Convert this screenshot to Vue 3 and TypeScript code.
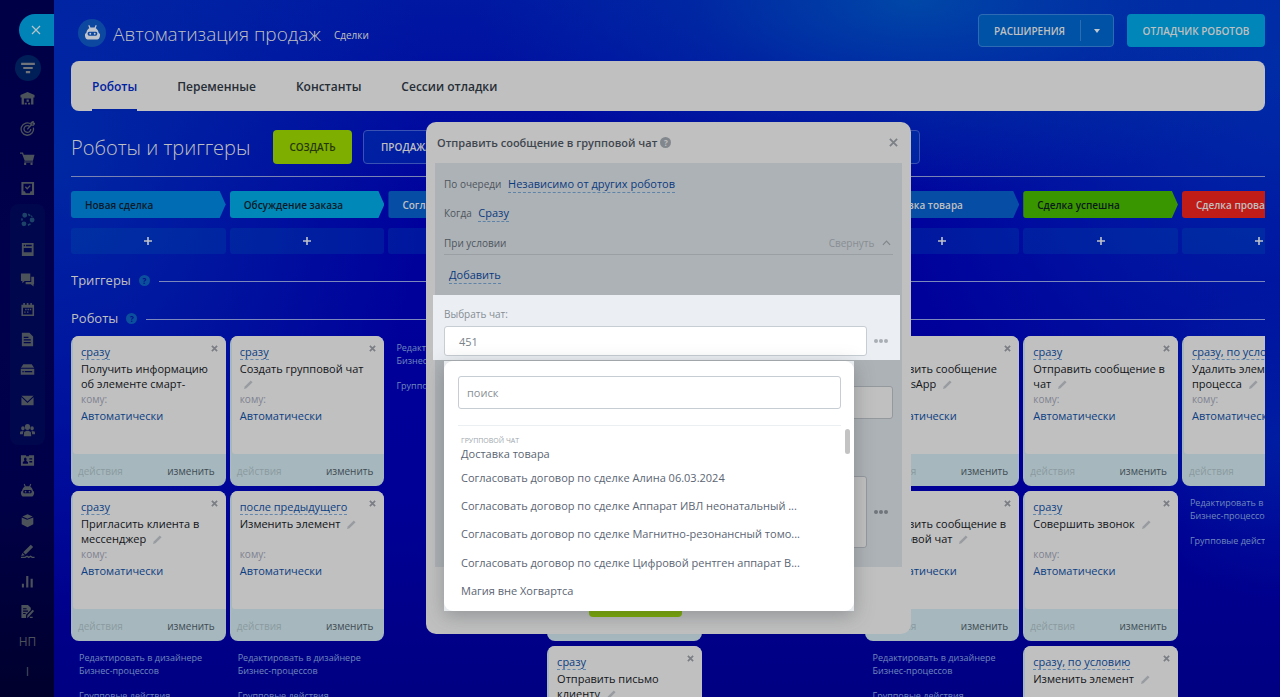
<script setup lang="ts">
import { ref } from 'vue'

interface Icon {
  name: string
  fill?: string
  stroke?: string
}

interface Robot {
  when: string
  title: string
  clipped?: boolean
}

interface Stage {
  title: string
  tone: string
  robots: Robot[]
  links: boolean
}

const robotHead =
  'M2.2 8.2C2.6 5.6 4 4.4 5 3.9L4 1.3 5 .9 6.1 3.4H9.9L11 .9 12 1.3 11 3.9C12 4.4 13.4 5.6 13.8 8.2L15 9.4C15.4 12 14.2 14.5 12.6 14.5H3.4C1.8 14.5.6 12 1 9.4ZM4.8 7.4C3 7.4 3 11 4.8 11H11.2C13 11 13 7.4 11.2 7.4ZM5.9 8.3A.9.9 0 1 0 5.9 10.1.9.9 0 1 0 5.9 8.3ZM10.1 8.3A.9.9 0 1 0 10.1 10.1.9.9 0 1 0 10.1 8.3Z'

const topIcons: Icon[] = [
  { name: 'Главная', fill: 'M8 1 15.5 4.2V6.8H14.3V14.5H11.8V8H4.2V14.5H1.7V6.8H.5V4.2ZM7 9H9.4V11.4H7ZM5 12.4H7.2V14.5H5ZM8.6 12.4H10.8V14.5H8.6Z' },
  { name: 'Цели', stroke: 'M12 3.5A6.6 6.6 0 1 0 14.2 7M10.5 6A3.6 3.6 0 1 0 11.5 8.5M7.8 9 12 4.3M12 4.3V1.8L14 .6V2.6H15.6L14.4 4.3Z' },
  { name: 'Магазин', fill: 'M0 1.5H3.2L4 4H15.5L13.8 10.5H5L2.2 3H0ZM4.5 11.2H14V12.2H4.5ZM5.5 12.5A1.2 1.2 0 1 0 5.5 15 1.2 1.2 0 1 0 5.5 12.5ZM12.3 12.5A1.2 1.2 0 1 0 12.3 15 1.2 1.2 0 1 0 12.3 12.5Z' },
  { name: 'Задачи', fill: 'M1.5 1H15V15H1.5ZM3.7 3V11H5.2L6.2 13H10.3L11.3 11H12.8V3ZM5.2 6.7 6.2 5.7 7.7 7.2 10.4 4.4 11.4 5.4 7.7 9.2Z' },
]

const groupIcons: Icon[] = [
  { name: 'CRM', fill: 'M5 .8A2.6 2.6 0 1 0 5 6 2.6 2.6 0 1 0 5 .8ZM12.9 5.9A2.6 2.6 0 1 0 12.9 11.1 2.6 2.6 0 1 0 12.9 5.9ZM4.2 10A2.6 2.6 0 1 0 4.2 15.2 2.6 2.6 0 1 0 4.2 10ZM8.8 1.7 11.5 3.2 10.6 4.6 8.5 3.4ZM8.2 13 10.8 11.9 11.6 13.4 8.6 14.8ZM1.3 6.6 3 7 2.9 9 1.4 9.4ZM12 3.4 13.6 4.4 12.8 5.4 11.4 4.8Z' },
  { name: 'Сайты', fill: 'M2 1H14.5V15H2ZM4 3V4.4H5.4V3ZM6.3 3V4.4H12.5V3ZM4 6.3V11H12.5V6.3Z' },
  { name: 'Чаты', fill: 'M1 1.5H11V9.5H5L2.5 12V9.5H1ZM12 5H15V13H14.5V15.5L11.5 13H6V10.7H12Z' },
  { name: 'Календарь', fill: 'M1.5 3H3.5V1H5.2V3H7.2V1H9V3H11V1H12.7V3H15V15H1.5ZM3.2 6V13.3H13.3V6ZM5.5 7.2H7V8.7H5.5ZM8 7.2H9.5V8.7H8ZM10.5 7.2H12V8.7H10.5ZM4.5 10H6V11.5H4.5ZM7.5 10H9V11.5H7.5Z' },
  { name: 'Документы', fill: 'M2 .8H10L14 4.8V15.2H2ZM4 5V6.3H9V5ZM4 7.8V9.1H11.5V7.8ZM4 10.6V11.9H11.5V10.6Z' },
  { name: 'Диск', fill: 'M3.5 2.5H12.5L15 6H1ZM.8 7.2H15.2V13.5H.8ZM2.5 9.7V11H4V9.7ZM5 9.7V11H13V9.7Z' },
  { name: 'Почта', fill: 'M1.5 3H14.5L8 9ZM1.5 4.6 8 10.7 14.5 4.6V13H1.5Z' },
  { name: 'Группы', fill: 'M8 1A2.6 3 0 1 0 8 7.5 2.6 3 0 1 0 8 1ZM3.1 3.4A1.9 2.3 0 1 0 3.1 8 1.9 2.3 0 1 0 3.1 3.4ZM12.9 3.4A1.9 2.3 0 1 0 12.9 8 1.9 2.3 0 1 0 12.9 3.4ZM4 14 4.4 9.6 7 8.3H9L11.6 9.6 12 14ZM-.3 12 .3 9 3.6 8.6 3 12ZM16.3 12 15.7 9 12.4 8.6 13 12Z' },
]

const bottomIcons: Icon[] = [
  { name: 'Контакты', fill: 'M1 2.5H6.5V3.5H9.5V2.5H15V13.5H1ZM5.6 4.8C3.9 4.8 4 8 5 8.3L3 9.6V11.5H8.5V9.6L6.5 8.3C7.3 8 7.4 4.8 5.6 4.8ZM10 5.5V7H13V5.5ZM10 8.5V10H13V8.5Z' },
  { name: 'Роботы', fill: robotHead },
  { name: 'Склад', fill: 'M8 1.2 13.5 3.6 8 6 2.5 3.6ZM1.8 4.7 7.6 7.2 14.2 4.7V12L8 15.2 1.8 12Z' },
  { name: 'Подпись', fill: 'M11.5 .8 14 3.2 6 11.2 3.4 8.8ZM2.6 9.6 5.2 12 1.2 12.8Z', stroke: 'M1 14.3H5.5L7.5 13 9.3 14.3 11.3 13 13 14.2H15.5' },
  { name: 'Аналитика', fill: 'M2 10.5H4.2V14.5H2ZM6.6 2H8.9V14.5H6.6ZM11.3 5H13.6V14.5H11.3Z' },
  { name: 'Отчёты', fill: 'M1.5 1H8.5L11.5 4V6.5L6.5 11.5V15H1.5ZM3.3 4.5V5.7H7V4.5ZM3.3 7V8.2H8.5V7ZM3.3 9.5V10.7H6V9.5ZM13.5 6 15 7.5 9.5 13.5 7.5 14.8 8 12ZM10.5 13.5H13.5V15H10.5Z' },
]

const auto = 'сразу'

const stages: Stage[] = [
  {
    title: 'Новая сделка',
    tone: 'azure',
    links: true,
    robots: [
      { when: auto, title: 'Получить информацию об элементе смарт-', clipped: true },
      { when: auto, title: 'Пригласить клиента в мессенджер' },
    ],
  },
  {
    title: 'Обсуждение заказа',
    tone: 'cyan',
    links: true,
    robots: [
      { when: auto, title: 'Создать групповой чат' },
      { when: 'после предыдущего', title: 'Изменить элемент' },
    ],
  },
  { title: 'Согласование', tone: 'navy', links: true, robots: [] },
  {
    title: 'Оплата',
    tone: 'navy',
    links: false,
    robots: [
      { when: auto, title: 'Изменить элемент' },
      { when: auto, title: 'Изменить элемент' },
      { when: auto, title: 'Отправить письмо клиенту' },
    ],
  },
  { title: 'Сборка', tone: 'navy', links: false, robots: [] },
  {
    title: 'Доставка товара',
    tone: 'navy',
    links: true,
    robots: [
      { when: auto, title: 'Отправить сообщение в\u00a0WhatsApp' },
      { when: auto, title: 'Отправить сообщение в групповой чат' },
    ],
  },
  {
    title: 'Сделка успешна',
    tone: 'green',
    links: false,
    robots: [
      { when: auto, title: 'Отправить сообщение в чат' },
      { when: auto, title: 'Совершить звонок' },
      { when: 'сразу, по условию', title: 'Изменить элемент' },
    ],
  },
  {
    title: 'Сделка провалена',
    tone: 'red',
    links: true,
    robots: [{ when: 'сразу, по условию', title: 'Удалить элемент процесса' }],
  },
]

const tabs = ['Роботы', 'Переменные', 'Константы', 'Сессии отладки']
const activeTab = ref('Роботы')

const chats = [
  'Согласовать договор по сделке Алина 06.03.2024',
  'Согласовать договор по сделке Аппарат ИВЛ неонатальный ...',
  'Согласовать договор по сделке Магнитно-резонансный томо...',
  'Согласовать договор по сделке Цифровой рентген аппарат В...',
  'Магия вне Хогвартса',
]

const chat = ref('451')
const query = ref('')
</script>

<template>
  <div class="app">
    <aside class="side">
      <button class="side-close" type="button" aria-label="Закрыть">
        <svg viewBox="0 0 10 10" width="10" height="10"><path d="M1 1 9 9M9 1 1 9" /></svg>
      </button>
      <nav class="side-nav" aria-label="Разделы">
        <div class="side-set one">
          <a href="#" class="side-link" aria-label="Фильтр">
            <span class="side-round">
              <svg viewBox="0 0 16 14" width="14" height="12"><path d="M0 1H16V3.4H0ZM2.5 5.8H13.5V8.2H2.5ZM5.5 10.6H10.5V13H5.5Z" /></svg>
            </span>
          </a>
        </div>
        <div class="side-set four">
          <a v-for="i in topIcons" :key="i.name" href="#" class="side-link" :aria-label="i.name">
            <svg viewBox="0 0 16 16" width="15" height="15">
              <path v-if="i.fill" :d="i.fill" fill-rule="evenodd" />
              <path v-if="i.stroke" :d="i.stroke" class="line" />
            </svg>
          </a>
        </div>
        <div class="side-set eight">
          <a v-for="i in groupIcons" :key="i.name" href="#" class="side-link" :class="{ crm: i.name === 'CRM' }" :aria-label="i.name">
            <svg viewBox="0 0 16 16" width="15" height="15"><path :d="i.fill" fill-rule="evenodd" /></svg>
          </a>
        </div>
        <div class="side-set eight plain">
          <a v-for="i in bottomIcons" :key="i.name" href="#" class="side-link" :aria-label="i.name">
            <svg viewBox="0 0 16 16" width="15" height="15">
              <path v-if="i.fill" :d="i.fill" fill-rule="evenodd" />
              <path v-if="i.stroke" :d="i.stroke" class="line" />
            </svg>
          </a>
          <a href="#" class="side-link">НП</a>
          <a href="#" class="side-link">I</a>
        </div>
      </nav>
    </aside>

    <main class="page">
      <header class="head">
        <span class="logo"><svg viewBox="0 0 16 16" width="17" height="17"><path :d="robotHead" fill-rule="evenodd" /></svg></span>
        <h1>Автоматизация продаж</h1>
        <a href="#" class="crumb">Сделки</a>
        <div class="split">
          <button type="button" class="split-main">РАСШИРЕНИЯ</button>
          <button type="button" class="split-more" aria-label="Ещё">
            <svg viewBox="0 0 6 4" width="6" height="4"><path d="M0 0H6L3 4Z" /></svg>
          </button>
        </div>
        <button type="button" class="debug">ОТЛАДЧИК РОБОТОВ</button>
      </header>

      <nav class="tabs" aria-label="Вкладки">
        <a v-for="t in tabs" :key="t" href="#" :class="{ active: t === activeTab }" @click.prevent="activeTab = t">{{ t }}</a>
      </nav>

      <div class="toolbar">
        <h2>Роботы и триггеры</h2>
        <button type="button" class="create">СОЗДАТЬ</button>
        <button type="button" class="funnel">ПРОДАЖА</button>
      </div>

      <section class="board-wrap">
        <div class="board stages">
          <div v-for="s in stages" :key="s.title" class="stage" :class="s.tone">{{ s.title }}</div>
        </div>
        <div class="board adders">
          <button v-for="s in stages" :key="s.title" type="button" class="add" :aria-label="'Добавить: ' + s.title">
            <svg viewBox="0 0 8 8" width="8" height="8"><path d="M4 0V8M0 4H8" /></svg>
          </button>
        </div>
        <div class="divider first"><h3>Триггеры</h3><span class="help">?</span><hr /></div>
        <div class="divider"><h3>Роботы</h3><span class="help">?</span><hr /></div>
        <div class="board">
          <div v-for="s in stages" :key="s.title" class="column">
            <article v-for="(r, n) in s.robots" :key="n" class="card">
              <div class="card-body">
                <div class="card-top">
                  <a href="#" class="when">{{ r.when }}</a>
                  <button type="button" class="card-x" aria-label="Удалить">
                    <svg viewBox="0 0 8 8" width="7" height="7"><path d="M1 1 7 7M7 1 1 7" /></svg>
                  </button>
                </div>
                <p class="card-title">{{ r.title }} <svg v-if="!r.clipped" class="pencil" viewBox="0 0 10 10" width="9" height="9"><path d="M0 10 .8 7.2 7.5 .5 9.5 2.5 2.8 9.2Z" /></svg></p>
                <span class="whom">кому:</span>
                <a href="#" class="who">Автоматически</a>
              </div>
              <div class="card-foot">
                <button type="button" class="acts">действия</button>
                <button type="button" class="edit">изменить</button>
              </div>
            </article>
            <div v-if="s.links" class="links">
              <a href="#">Редактировать в дизайнере<br />Бизнес-процессов</a>
              <a href="#">Групповые действия</a>
            </div>
          </div>
        </div>
      </section>

      <section class="modal" role="dialog" aria-labelledby="modal-title">
        <header class="modal-head">
          <h2 id="modal-title">Отправить сообщение в групповой чат</h2>
          <span class="help grey">?</span>
          <button type="button" class="modal-x" aria-label="Закрыть окно">
            <svg viewBox="0 0 10 10" width="9" height="9"><path d="M1 1 9 9M9 1 1 9" /></svg>
          </button>
        </header>
        <div class="panel">
          <div class="line-row">По очереди <a href="#" class="dash">Независимо от других роботов</a></div>
          <div class="line-row">Когда <a href="#" class="dash">Сразу</a></div>
          <div class="cond">
            <span>При условии</span>
            <button type="button" class="fold">Свернуть
              <svg viewBox="0 0 10 6" width="9" height="6"><path d="M1 5 5 1 9 5" /></svg>
            </button>
          </div>
          <div class="adding"><a href="#" class="dash">Добавить</a></div>
          <div class="picker">
            <label for="chat">Выбрать чат:</label>
            <div class="field">
              <input id="chat" v-model="chat" type="text" />
              <button type="button" class="dots" aria-label="Вставить значение"><i></i><i></i><i></i></button>
            </div>
            <div class="drop">
              <div class="drop-in">
                <input v-model="query" type="text" class="search" placeholder="поиск" aria-label="поиск" />
                <div class="group">ГРУППОВОЙ ЧАТ</div>
                <div class="lead">Доставка товара</div>
                <ul>
                  <li v-for="c in chats" :key="c">{{ c }}</li>
                </ul>
                <span class="thumb"></span>
              </div>
            </div>
          </div>
          <div class="rest">
            <input type="text" class="sender" aria-label="Отправитель" />
            <div class="field">
              <textarea aria-label="Текст сообщения"></textarea>
              <button type="button" class="dots dim" aria-label="Вставить значение в текст"><i></i><i></i><i></i></button>
            </div>
          </div>
        </div>
        <footer class="modal-foot">
          <button type="button" class="save" aria-label="Сохранить"></button>
          <button type="button" class="cancel" aria-label="Отмена"></button>
        </footer>
      </section>
    </main>
  </div>
</template>

<style>
body {
  margin: 0;
  overflow: hidden;
}
</style>

<style scoped>
* {
  box-sizing: border-box;
}

.app {
  display: flex;
  height: 100vh;
  overflow: hidden;
  background: #00009a;
  font-family: "Open Sans", "Noto Sans", sans-serif;
  font-size: 11px;
  color: #c0c0c0;
}

h1,
h2,
h3,
p,
ul {
  margin: 0;
  padding: 0;
  font-weight: 400;
}

button {
  margin: 0;
  padding: 0;
  border: 0;
  background: none;
  color: inherit;
  font: inherit;
  cursor: pointer;
}

a {
  color: inherit;
  text-decoration: none;
}

/* left rail */
.side {
  flex: 0 0 54px;
  display: flex;
  flex-direction: column;
  padding-bottom: 10px;
  background: linear-gradient(180deg, #000046 0%, #00004c 40%, #000049 70%, #00002d 100%);
}

.side-close {
  flex: none;
  align-self: flex-end;
  width: 35px;
  height: 32px;
  margin-top: 14px;
  padding-right: 1px;
  border-radius: 16px 0 0 16px;
  background: #0084b8;
}

.side-close path {
  fill: none;
  stroke: #b4c4c8;
  stroke-width: 1.2;
}

.side-nav {
  flex: 1;
  display: flex;
  flex-direction: column;
  margin-top: 7px;
}

.side-set {
  display: flex;
  flex-direction: column;
  margin: 0 9px 0 10px;
}

.one { flex: 1 1 0; }
.four { flex: 4 1 0; }
.eight {
  flex: 8 1 0;
  border-radius: 8px;
  background: #00074d;
}
.plain { background: none; }

.side-link {
  flex: 1 1 0;
  display: flex;
  align-items: center;
  justify-content: center;
  color: #4c525a;
  font-size: 12px;
}

.side-link svg {
  fill: #4c525a;
}

.side-link .line {
  fill: none;
  stroke: #4c525a;
  stroke-width: 1.4;
}

.side-link.crm svg {
  fill: #1d4468;
}

.side-round {
  display: flex;
  align-items: center;
  justify-content: center;
  width: 26px;
  height: 26px;
  border-radius: 50%;
  background: #001f58;
}

.side-round svg {
  fill: #70747a;
}

/* page */
.page {
  position: relative;
  flex: 1;
  min-width: 0;
  padding: 14px 15px 0 17px;
  overflow: hidden;
  background:
    radial-gradient(ellipse 440px 190px at 860px 0, rgba(0, 76, 168, 0.9), rgba(0, 54, 164, 0.5) 50%, transparent),
    radial-gradient(ellipse 380px 460px at 0 160px, rgba(0, 46, 164, 0.85), transparent),
    radial-gradient(ellipse 420px 480px at 100% 60px, rgba(0, 48, 168, 0.85), transparent),
    radial-gradient(ellipse 160px 160px at 100% 440px, rgba(0, 42, 166, 0.6), transparent),
    linear-gradient(180deg, #0018a2 0, #00009c 220px, #000096 500px, #000082 100%);
}

.head {
  display: flex;
  align-items: center;
  height: 33px;
}

.logo {
  display: flex;
  align-items: center;
  justify-content: center;
  width: 28px;
  height: 28px;
  margin: 4px 7px 0;
  border-radius: 50%;
  background: #0c48a0;
}

.logo svg {
  fill: #c0c4cc;
}

h1 {
  margin-top: 6px;
  font-size: 19px;
  font-weight: 300;
  line-height: 28px;
  white-space: nowrap;
}

.crumb {
  margin: 8px auto 0 13px;
  font-size: 10px;
}

.split {
  display: flex;
  align-items: center;
  width: 136px;
  height: 33px;
  border: 1px solid #2d6cb4;
  border-radius: 4px;
  background: #0052a6;
  font-size: 10px;
  font-weight: 600;
}

.split-main {
  flex: 1;
  height: 21px;
  border-right: 1px solid #2d6cb4;
}

.split-more {
  width: 32px;
  height: 31px;
  line-height: 0;
}

.split-more svg {
  fill: #c0c8d0;
}

.debug {
  width: 138px;
  height: 33px;
  margin-left: 13px;
  border-radius: 4px;
  background: #0086b8;
  font-size: 10px;
  font-weight: 600;
}

.tabs {
  display: flex;
  gap: 40px;
  height: 50px;
  margin-top: 14px;
  padding: 0 21px;
  border-radius: 8px;
  background: #c0c0c0;
  color: #262d36;
  font-size: 12px;
  font-weight: 600;
  line-height: 52px;
}

.tabs .active {
  border-bottom: 2px solid #0022a0;
  color: #0022a0;
}

.toolbar {
  display: flex;
  align-items: center;
  height: 66px;
  padding-top: 7px;
  border-bottom: 1px solid #7a84b4;
}

.toolbar h2 {
  width: 202px;
  font-size: 20px;
  font-weight: 300;
  white-space: nowrap;
}

.create {
  width: 79px;
  height: 34px;
  border-radius: 4px;
  background: #7eae00;
  color: #26380a;
  font-size: 10px;
  font-weight: 600;
}

.funnel {
  flex: 0 1 557px;
  height: 34px;
  margin-left: 11px;
  padding-left: 17px;
  border: 1px solid #3a52b4;
  border-radius: 4px;
  background: rgba(0, 70, 170, 0.35);
  font-size: 10px;
  font-weight: 600;
  text-align: left;
}

.board-wrap {
  overflow: hidden;
  padding-top: 14px;
}

.board {
  display: grid;
  grid-template-columns: repeat(8, minmax(0, 1fr));
  gap: 4px;
  width: 106%;
}

.stage {
  height: 27px;
  padding-left: 14px;
  border-radius: 3px 0 0 3px;
  clip-path: polygon(0 0, calc(100% - 6px) 0, 100% 50%, calc(100% - 6px) 100%, 0 100%);
  font-size: 10px;
  font-weight: 600;
  line-height: 28px;
  white-space: nowrap;
}

.azure { background: #006cb4; color: #0b1a28; }
.cyan { background: #0088b8; color: #0b1a28; }
.navy { background: #064da6; }
.green { background: #3a9600; color: #0b1a18; }
.red { background: #c01c18; }

.adders {
  margin-top: 10px;
}

.add {
  height: 26px;
  border-radius: 3px;
  background: rgba(0, 88, 168, 0.25);
  line-height: 0;
}

.add path {
  fill: none;
  stroke: #c0c4c8;
  stroke-width: 1.6;
}

.divider {
  display: flex;
  align-items: center;
  height: 38px;
}

.divider.first {
  margin-top: 7px;
}

.divider:not(.first) {
  margin-bottom: -1px;
}

.divider h3 {
  font-size: 13px;
}

.divider hr {
  flex: 1;
  height: 1px;
  margin: 2px 0 0 9px;
  border: 0;
  background: #7c88bc;
}

.help {
  flex: none;
  width: 11px;
  height: 11px;
  margin-left: 8px;
  border-radius: 50%;
  background: #0b509c;
  color: #000c90;
  font-size: 8px;
  font-weight: 700;
  line-height: 11px;
  text-align: center;
}

.help.grey {
  margin-left: 3px;
  background: #81878c;
  color: #c0c0c0;
}

.column {
  display: flex;
  flex-direction: column;
  gap: 5px;
  min-width: 0;
}

.card {
  display: flex;
  flex-direction: column;
  height: 150px;
  padding-left: 2px;
  border-radius: 8px;
  overflow: hidden;
  background: #a6b8bd;
}

.card-body {
  flex: 1;
  display: flex;
  flex-direction: column;
  align-items: flex-start;
  padding: 8px 8px 0;
  border-radius: 0 0 0 3px;
  background: #c0c0c0;
}

.card-top {
  display: flex;
  justify-content: space-between;
  align-items: flex-start;
  align-self: stretch;
  height: 17px;
}

.when {
  height: 16px;
  border-bottom: 1px dashed #6487ae;
  color: #0b3e82;
  line-height: 16px;
  white-space: nowrap;
}

.card-x {
  padding: 1px 0;
  line-height: 0;
}

.card-x path {
  fill: none;
  stroke: #7b7e84;
  stroke-width: 2;
}

.card-title {
  height: 30px;
  color: #111418;
  line-height: 15px;
}

.pencil {
  margin-left: 4px;
  fill: #989ca0;
  vertical-align: -1px;
}

.whom {
  color: #7f8290;
  font-size: 10px;
  line-height: 16px;
}

.who {
  color: #0b3e82;
  line-height: 18px;
}

.card-foot {
  display: flex;
  align-items: center;
  justify-content: space-between;
  height: 32px;
  padding: 1px 11px 0 5px;
  font-size: 10px;
}

.acts { color: #8b9aa0; }
.edit { color: #3f4b54; }

.links {
  display: flex;
  flex-direction: column;
  gap: 12px;
  padding: 5px 0 0 8px;
  color: #7088bc;
  font-size: 9px;
  line-height: 13px;
  white-space: nowrap;
}

/* dialog */
.modal {
  position: absolute;
  top: 122px;
  left: 50%;
  width: 485px;
  margin-left: -241px;
  padding: 0 9px 17px;
  border-radius: 10px;
  background: #c0c0c0;
  color: #4d555e;
  font-size: 10px;
}

.modal-head {
  display: flex;
  align-items: center;
  height: 41px;
  padding: 0 4px 0 2px;
}

.modal-head h2 {
  font-size: 11px;
  font-weight: 600;
  color: #3f464e;
}

.modal-x {
  margin-left: auto;
  line-height: 0;
}

.modal-x path {
  fill: none;
  stroke: #7b8186;
  stroke-width: 2;
}

.panel {
  padding: 7px 9px 19px;
  background: #adb2b6;
}

.line-row {
  height: 29px;
  line-height: 28px;
}

.dash {
  display: inline-block;
  margin-left: 4px;
  border-bottom: 1px dashed #5d83a8;
  color: #0b3a7e;
  font-size: 11px;
  line-height: 17px;
}

.cond {
  display: flex;
  justify-content: space-between;
  align-items: center;
  height: 27px;
  padding-top: 3px;
  border-bottom: 1px solid #9a9fa4;
}

.fold {
  padding-right: 2px;
  color: #888e93;
}

.fold svg {
  margin-left: 5px;
  vertical-align: 1px;
}

.fold path {
  fill: none;
  stroke: #80868c;
  stroke-width: 1.3;
}

.adding {
  height: 40px;
  padding: 11px 1px 0;
}

.picker {
  position: relative;
  height: 65px;
  margin: 0 -7px 0 -11px;
  padding: 12px 11px 0;
  background: #ebeff3;
  color: #868d94;
}

.picker label {
  display: block;
  height: 19px;
  line-height: 15px;
}

.field {
  display: flex;
  align-items: center;
}

.field input {
  flex: 1;
  min-width: 0;
  height: 30px;
  padding: 0 14px;
  border: 1px solid #c6cdd3;
  border-radius: 3px;
  background: #fff;
  color: #7a828a;
  font: inherit;
  font-size: 11px;
}

.dots {
  display: flex;
  gap: 1px;
  flex: none;
  width: 14px;
  margin-left: 7px;
  margin-right: 1px;
}

.dots i {
  width: 4px;
  height: 4px;
  border-radius: 50%;
  background: #a8aeb4;
}

.dots.dim {
  margin-right: 5px;
}

.dots.dim i {
  background: #6f757b;
}

.drop {
  position: absolute;
  z-index: 2;
  top: 66px;
  left: 11px;
  width: 410px;
  background: #e8ebee;
  box-shadow: 0 5px 18px rgba(60, 66, 72, 0.35);
}

.drop-in {
  position: relative;
  height: 250px;
  padding: 15px 13px 0 14px;
  border-radius: 9px;
  background: #fff;
  color: #5b6573;
}

.search {
  display: block;
  width: 100%;
  height: 33px;
  padding: 0 8px;
  border: 1px solid #c6cdd3;
  border-radius: 3px;
  font: inherit;
  font-size: 11px;
}

.search::placeholder {
  color: #8a8f94;
}

.group {
  margin-top: 16px;
  padding: 10px 3px 0;
  border-top: 1px solid #eceff1;
  color: #a0a6ac;
  font-size: 7px;
  line-height: 10px;
}

.lead {
  padding: 0 3px;
  font-size: 11px;
  line-height: 16px;
}

.drop ul {
  display: grid;
  grid-auto-rows: 1fr;
  height: 142px;
  margin-top: 1px;
  list-style: none;
}

.drop li {
  display: flex;
  align-items: center;
  padding: 0 3px;
  font-size: 11px;
  white-space: nowrap;
}

.thumb {
  position: absolute;
  top: 68px;
  right: 4px;
  width: 5px;
  height: 25px;
  border-radius: 3px;
  background: #c3c3c3;
}

.rest {
  margin-top: 26px;
}

.sender,
.rest textarea {
  display: block;
  width: 100%;
  height: 33px;
  border: 1px solid #94999e;
  border-radius: 3px;
  background: #c0c0c0;
}

.rest .field {
  margin-top: 57px;
}

.rest textarea {
  flex: 1;
  min-width: 0;
  height: 72px;
  resize: none;
}

.modal-foot {
  display: flex;
  justify-content: center;
  gap: 16px;
  margin-top: 16px;
}

.save {
  width: 93px;
  height: 34px;
  border-radius: 4px;
  background: #7eae00;
}

.cancel {
  width: 50px;
}
</style>
